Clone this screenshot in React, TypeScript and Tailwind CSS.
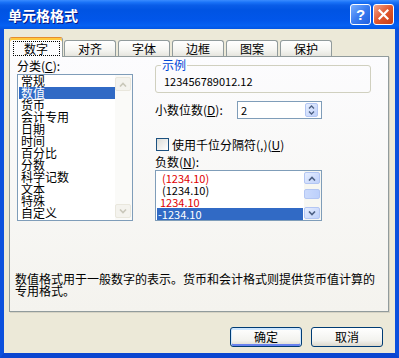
import React from "react";

const Chev = ({ dir, color }: { dir: "up" | "down"; color: string }) => (
  <svg width="8" height="5" viewBox="0 0 8 5">
    <polyline
      points={dir === "up" ? "1,4.5 4,1.5 7,4.5" : "1,0.5 4,3.5 7,0.5"}
      fill="none"
      stroke={color}
      strokeWidth="1.6"
    />
  </svg>
);

const ScrollBtn = ({ dir, enabled, h }: { dir: "up" | "down"; enabled: boolean; h: string }) => (
  <div
    className={
      enabled
        ? `${h} w-full rounded-[2px] border border-[#B3C6F3] bg-[linear-gradient(135deg,#E6EEFF,#BFD1FA)] flex items-center justify-center`
        : `${h} w-full rounded-[2px] border border-[#E9E7DD] bg-[#F4F3EE] flex items-center justify-center`
    }
  >
    <Chev dir={dir} color={enabled ? "#4D6185" : "#C9C7BA"} />
  </div>
);

const Tab = ({ label }: { label: string }) => (
  <div className="h-[16px] w-[52px] mr-[2px] rounded-t-[3px] border border-b-0 border-[#919B9C] bg-[linear-gradient(to_bottom,#FFFFFF,#F5F5F1_60%,#E6E5DE)] flex items-center justify-center">
    {label}
  </div>
);

const categories = ["常规", "数值", "货币", "会计专用", "日期", "时间", "百分比", "分数", "科学记数", "文本", "特殊", "自定义"];

export default function App() {
  return (
    <div className="w-[399px] h-[358px] flex flex-col bg-[#ECE9D8] overflow-hidden font-['Noto_Sans_CJK_SC',sans-serif] text-[12px] leading-[12px] text-black">
      {/* Title bar */}
      <div className="h-[29px] shrink-0 flex items-center pl-[8px] pr-[5px] bg-[linear-gradient(to_bottom,#3A8CFF_0%,#1A73F8_8%,#0A5DE8_18%,#0054E3_35%,#0156EA_70%,#0560F2_88%,#0255E4_100%)]">
        <div className="text-white font-bold text-[14px] leading-[14px] tracking-[0px] [text-shadow:1px_1px_0_#0A1883]">单元格格式</div>
        <div className="ml-auto flex gap-[2px]">
          <div className="w-[21px] h-[21px] rounded-[3px] border border-white bg-[linear-gradient(135deg,#7AB0FF,#3A7CF0_50%,#1F5FE0)] flex items-center justify-center text-white font-bold text-[15px] leading-[15px] font-['Liberation_Sans',sans-serif]">
            ?
          </div>
          <div className="w-[21px] h-[21px] rounded-[3px] border border-white bg-[linear-gradient(135deg,#F2A68F,#E0572E_50%,#C93D14)] flex items-center justify-center">
            <svg width="11" height="11" viewBox="0 0 11 11">
              <path d="M1.5 1.5 L9.5 9.5 M9.5 1.5 L1.5 9.5" stroke="white" strokeWidth="2.2" strokeLinecap="square" />
            </svg>
          </div>
        </div>
      </div>

      {/* Body */}
      <div className="flex-1 flex flex-col border-x-4 border-b-[5px] border-x-[#0B50DD] border-b-[#0A45D0]">
        {/* Tabs */}
        <div className="h-[27px] shrink-0 flex items-end pl-[5px]">
          <div className="relative z-10 -mb-px h-[20px] w-[54px] rounded-t-[3px] border border-b-0 border-[#919B9C] border-t-[#E68B2C] bg-[#FCFCFE] shadow-[inset_0_2px_0_#FFC83C] flex items-center justify-center pt-[2px]">
            <span className="border border-dotted border-black h-[15px] w-[47px] flex items-center justify-center">数字</span>
          </div>
          <div className="ml-[1px] flex items-end">
            <Tab label="对齐" />
            <Tab label="字体" />
            <Tab label="边框" />
            <Tab label="图案" />
            <Tab label="保护" />
          </div>
        </div>

        {/* Panel */}
        <div className="ml-[5px] w-[380px] h-[256px] shrink-0 border border-[#919B9C] bg-[linear-gradient(to_bottom,#FCFCFE,#F4F3EE)] shadow-[1px_1px_0_#D6D3C4] flex flex-col">
          <div className="flex pl-[7px] pt-[2px]">
            {/* Left column */}
            <div className="w-[116px] flex flex-col">
              <div className="h-[14px] leading-[14px]">
                分类(<span className="underline">C</span>):
              </div>
              <div className="mt-[1px] h-[147px] border border-[#7F9DB9] bg-white flex">
                <div className="flex-1 flex flex-col pl-[1px]">
                  {categories.map((c, i) => (
                    <div
                      key={c}
                      className={
                        i === 1
                          ? "h-[12px] leading-[12px] pl-[2px] bg-[#316AC5] text-white"
                          : "h-[12px] leading-[12px] pl-[2px]"
                      }
                    >
                      {c}
                    </div>
                  ))}
                </div>
                <div className="w-[17px] bg-[#FAFAF8] flex flex-col justify-between py-[2px] pr-[1px]">
                  <ScrollBtn dir="up" enabled={false} h="h-[14px]" />
                  <ScrollBtn dir="down" enabled={false} h="h-[14px]" />
                </div>
              </div>
            </div>

            {/* Right column */}
            <div className="ml-[22px] w-[216px] flex flex-col">
              <fieldset className="border border-[#D0D0BF] rounded-[3px] pl-[8px] pb-[5px]">
                <legend className="ml-[-3px] px-[1px] text-[#0046D5] h-[12px] leading-[12px]">示例</legend>
                <div className="mt-[4px] h-[12px] leading-[12px] text-[11px]">123456789012.12</div>
              </fieldset>

              <div className="mt-[8px] h-[18px] flex items-center">
                <div className="w-[82px]">
                  小数位数(<span className="underline">D</span>):
                </div>
                <div className="w-[85px] h-[18px] border border-[#7F9DB9] bg-white flex items-center">
                  <span className="pl-[3px] flex-1 text-[11px]">2</span>
                  <div className="mr-[3px] w-[13px] h-[14px] flex flex-col rounded-[2px] border border-[#B3C6F3] bg-[linear-gradient(135deg,#E6EEFF,#BFD1FA)]">
                    <div className="flex-1 flex items-center justify-center">
                      <svg width="7" height="4" viewBox="0 0 7 4"><polyline points="1,3.5 3.5,1 6,3.5" fill="none" stroke="#4D6185" strokeWidth="1.3" /></svg>
                    </div>
                    <div className="flex-1 flex items-center justify-center">
                      <svg width="7" height="4" viewBox="0 0 7 4"><polyline points="1,0.5 3.5,3 6,0.5" fill="none" stroke="#4D6185" strokeWidth="1.3" /></svg>
                    </div>
                  </div>
                </div>
              </div>

              <div className="mt-[19px] h-[13px] flex items-center">
                <div className="ml-[1px] w-[13px] h-[13px] border border-[#1C5180] bg-[linear-gradient(135deg,#DCDCD7,#FFFFFF)]" />
                <span className="ml-[3px]">
                  使用千位分隔符(,)(<span className="underline">U</span>)
                </span>
              </div>

              <div className="mt-[5px] h-[12px] leading-[12px]">
                负数(<span className="underline">N</span>):
              </div>

              <div className="mt-[2px] w-[167px] h-[51px] border border-[#7F9DB9] bg-white flex">
                <div className="flex-1 flex flex-col pt-[1px] px-[1px] text-[11px]">
                  <div className="h-[12px] leading-[12px] pl-[5px] text-[#E00000]">(1234.10)</div>
                  <div className="h-[12px] leading-[12px] pl-[5px]">(1234.10)</div>
                  <div className="h-[12px] leading-[12px] pl-[3px] text-[#E00000]">1234.10</div>
                  <div className="h-[12px] leading-[12px] pl-[1px] bg-[#316AC5] text-white">-1234.10</div>
                </div>
                <div className="w-[17px] bg-[#F7F7F2] flex flex-col py-[1px] pr-[1px]">
                  <ScrollBtn dir="up" enabled={true} h="h-[12px]" />
                  <div className="mt-[5px] h-[10px] rounded-[2px] border border-[#B3C6F3] bg-[linear-gradient(90deg,#CBDAFC,#BCD0FB)]" />
                  <div className="flex-1" />
                  <ScrollBtn dir="down" enabled={true} h="h-[12px]" />
                </div>
              </div>
            </div>
          </div>

          <div className="mt-[52px] pl-[5px] leading-[12px]">
            数值格式用于一般数字的表示。货币和会计格式则提供货币值计算的
            <br />
            专用格式。
          </div>
        </div>

        {/* Buttons */}
        <div className="mt-[15px] flex justify-end gap-[9px] pr-[12px]">
          <button className="w-[72px] h-[20px] rounded-[3px] border border-[#003C74] bg-[linear-gradient(to_bottom,#FFFFFF,#F2F2EE_70%,#DCD8CC)] shadow-[inset_0_1px_0_1px_#CEE7FF,inset_0_-1px_0_1px_#6982EE] flex items-center justify-center text-[12px] leading-[12px]">
            确定
          </button>
          <button className="w-[72px] h-[20px] rounded-[3px] border border-[#003C74] bg-[linear-gradient(to_bottom,#FFFFFF,#F2F2EE_70%,#DCD8CC)] flex items-center justify-center text-[12px] leading-[12px]">
            取消
          </button>
        </div>
      </div>
    </div>
  );
}
